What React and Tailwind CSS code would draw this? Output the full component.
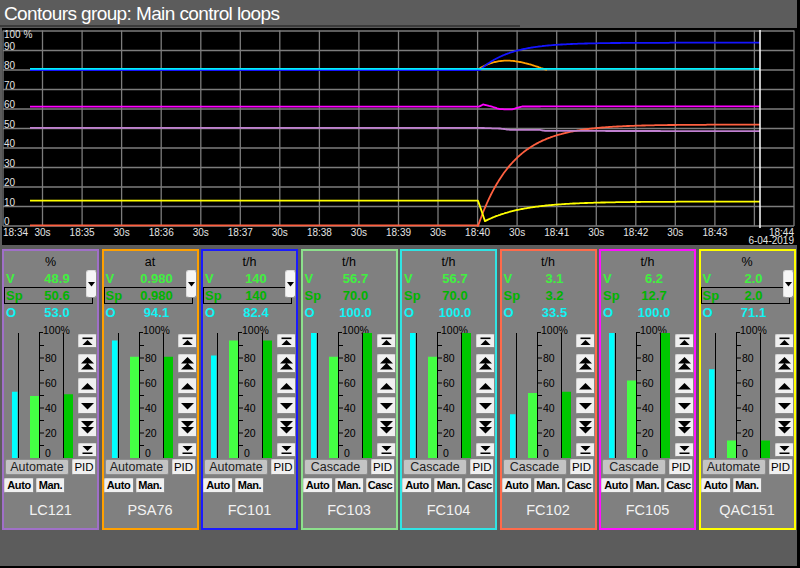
import React from 'react';

// trend chart helpers: page X -> svg x, value (0..100) -> svg y
const sx = (X) => X - 2;
const sy = (v) => 198 - 1.95 * v;

function piecewise(points) {
  return (X) => {
    for (let i = 1; i < points.length; i++) {
      const [x0, v0] = points[i - 1];
      const [x1, v1] = points[i];
      if (X <= x1) return v0 + ((v1 - v0) * (X - x0)) / (x1 - x0);
    }
    return points[points.length - 1][1];
  };
}

function series(fn, from = 30, to = 760) {
  const pts = [];
  for (let X = from; X <= to; X += 1) pts.push(`${sx(X)},${sy(fn(X)).toFixed(1)}`);
  return pts.join(' ');
}

const TRENDS = [
  { color: '#ff6040', pts: series((X) => (X < 478 ? 0.3 : 52 * (1 - Math.exp(-(X - 478) / 35)))) },
  {
    color: '#ffff00',
    pts: series((X) => {
      if (X < 478) return 13;
      if (X < 485) return 13 - (10.5 * (X - 478)) / 7;
      return 2.5 + 10 * (1 - Math.exp(-(X - 485) / 38));
    }),
  },
  { color: '#c080d0', pts: series(piecewise([[30, 50.3], [480, 50.3], [500, 50], [510, 49.3], [540, 49.3], [545, 48.8], [760, 48.6]])) },
  { color: '#ff00ff', pts: series(piecewise([[30, 61.2], [479, 61.2], [483, 62.3], [490, 61.5], [500, 59.9], [512, 59.8], [522, 61.3], [760, 61.4]])) },
  { color: '#ffa000', pts: series((X) => 80 + 4.8 * Math.sin(Math.PI * Math.pow((X - 478) / 69, 0.8)), 478, 547) },
  { color: '#1414ff', pts: series((X) => (X < 480 ? 80 : 80 + 14 * (1 - Math.exp(-(X - 480) / 30)))) },
  { color: '#00f0ff', pts: series(() => 80.6) },
];

// 18:34 ... 18:44, the half-minute under the cursor is not printed
const TIME_LABELS = Array.from({ length: 21 }, (_, k) => {
  if (k === 19) return '';
  if (k % 2 === 1) return '30s';
  return `18:${34 + k / 2}`;
});

function TrendChart() {
  const vLines = Array.from({ length: 21 }, (_, k) => 1 + 39.55 * k);
  const hVals = [0, 10, 20, 30, 40, 50, 60, 70, 80, 90, 100];
  return (
    <div className="ml-[2px] w-[795px] h-[217px] bg-black">
      <svg width="795" height="217" fontFamily="Liberation Sans, Arial, sans-serif">
        {vLines.map((x, i) => (
          <line key={'v' + i} x1={x.toFixed(1)} y1="2.5" x2={x.toFixed(1)} y2="198" stroke="#7c7c7c" strokeWidth="1.3" />
        ))}
        {hVals.map((v) => (
          <line key={'h' + v} x1="1" y1={sy(v)} x2="792" y2={sy(v)} stroke="#7c7c7c" strokeWidth="1.3" />
        ))}
        {hVals.map((v) => (
          <text key={'l' + v} x="2" y={v === 100 ? 10 : sy(v) - 0.8} fontSize="10" fill="#e4e4e4">
            {v === 100 ? '100 %' : v}
          </text>
        ))}
        {TRENDS.map((t, i) => (
          <polyline key={i} points={t.pts} fill="none" stroke={t.color} strokeWidth="1.8" strokeLinejoin="round" />
        ))}
        <line x1="758" y1="2" x2="758" y2="200" stroke="#ffffff" strokeWidth="1.5" />
        {TIME_LABELS.map((label, k) =>
          label ? (
            <text
              key={'t' + k}
              x={k === 0 ? 1 : k === 20 ? 792 : (1 + 39.55 * k).toFixed(1)}
              y="207.5"
              fontSize="10"
              fill="#e4e4e4"
              textAnchor={k === 0 ? 'start' : k === 20 ? 'end' : 'middle'}
            >
              {label}
            </text>
          ) : null
        )}
        <text x="792" y="215.5" fontSize="10" fill="#e4e4e4" textAnchor="end">
          6-04-2019
        </text>
      </svg>
    </div>
  );
}

const LOOPS = [
  { name: 'LC121', unit: '%', v: '48.9', sp: '50.6', o: '53.0', mode: 'Automate', border: 'border-[#a070c8]', boxed: true, bars: [53, 49.6, 51] },
  { name: 'PSA76', unit: 'at', v: '0.980', sp: '0.980', o: '94.1', mode: 'Automate', border: 'border-[#ffa000]', boxed: true, bars: [94, 81, 81] },
  { name: 'FC101', unit: 't/h', v: '140', sp: '140', o: '82.4', mode: 'Automate', border: 'border-[#1a1aff]', boxed: true, bars: [82, 94, 94] },
  { name: 'FC103', unit: 't/h', v: '56.7', sp: '70.0', o: '100.0', mode: 'Cascade', border: 'border-[#8ce08c]', boxed: false, bars: [100, 81, 100] },
  { name: 'FC104', unit: 't/h', v: '56.7', sp: '70.0', o: '100.0', mode: 'Cascade', border: 'border-[#30e4e4]', boxed: false, bars: [100, 81, 100] },
  { name: 'FC102', unit: 't/h', v: '3.1', sp: '3.2', o: '33.5', mode: 'Cascade', border: 'border-[#ff6a4a]', boxed: false, bars: [35, 52, 53] },
  { name: 'FC105', unit: 't/h', v: '6.2', sp: '12.7', o: '100.0', mode: 'Cascade', border: 'border-[#ff10ff]', boxed: false, bars: [100, 62, 100] },
  { name: 'QAC151', unit: '%', v: '2.0', sp: '2.0', o: '71.1', mode: 'Automate', border: 'border-[#ffff00]', boxed: true, bars: [71, 14, 14] },
];

function Gauge({ bars }) {
  const [o, pv, sp] = bars;
  const h = (p) => p * 1.25;
  const ticks = [10, 20, 30, 40, 50, 60, 70, 80, 90];
  return (
    <svg width="74" height="137" className="shrink-0" fontFamily="Liberation Sans, Arial, sans-serif">
      <rect x="8" y={137 - h(o)} width="5.5" height={h(o)} fill="#00ffff" />
      <line x1="14.5" y1="12" x2="14.5" y2="137" stroke="#000" />
      <rect x="26" y={137 - h(pv)} width="9" height={h(pv)} fill="#44ff44" />
      <line x1="35.5" y1="11" x2="35.5" y2="137" stroke="#000" />
      <line x1="35.5" y1="11.5" x2="39" y2="11.5" stroke="#000" />
      {ticks.map((t) => (
        <line key={t} x1="35.5" y1={137 - h(t)} x2="40" y2={137 - h(t)} stroke="#000" />
      ))}
      {[80, 60, 40, 20].map((t) => (
        <text key={t} x="41" y={137 - h(t) + 3.6} fontSize="10.5" fill="#000">
          {t}
        </text>
      ))}
      <text x="41" y="135.5" fontSize="10.5" fill="#000">
        0
      </text>
      <text x="39" y="12.5" fontSize="10.5" fill="#000">
        100%
      </text>
      <line x1="59.5" y1="12" x2="59.5" y2="137" stroke="#000" />
      <rect x="60" y={137 - h(sp)} width="9" height={h(sp)} fill="#00c800" />
    </svg>
  );
}

function Arrow({ kind }) {
  const up = (y, w) => `M${6.5 - w / 2} ${y + w / 2} L6.5 ${y} L${6.5 + w / 2} ${y + w / 2} Z`;
  const down = (y, w) => `M${6.5 - w / 2} ${y} L${6.5 + w / 2} ${y} L6.5 ${y + w / 2} Z`;
  let d = '';
  let bar = null;
  if (kind === 'top') {
    bar = <rect x="1.5" y="0.5" width="10" height="1.6" fill="#000" />;
    d = up(3, 10);
  } else if (kind === 'up2') d = up(0, 13) + ' ' + up(6, 13);
  else if (kind === 'up') d = up(1, 13);
  else if (kind === 'down') d = down(1, 13);
  else if (kind === 'down2') d = down(0, 13) + ' ' + down(6, 13);
  else if (kind === 'bottom') {
    d = down(0, 10);
    bar = <rect x="1.5" y="6.5" width="10" height="1.6" fill="#000" />;
  }
  const ht = kind === 'up2' || kind === 'down2' ? 13 : kind === 'top' || kind === 'bottom' ? 8.5 : 8;
  return (
    <svg width="13" height={ht} viewBox={`0 0 13 ${ht}`}>
      {bar}
      <path d={d} fill="#000" />
    </svg>
  );
}

const STEP_BUTTONS = [
  { kind: 'top', cls: 'mt-[13px] h-[14px]' },
  { kind: 'up2', cls: 'mt-[6px] h-[19px]' },
  { kind: 'up', cls: 'mt-[5px] h-[16px]' },
  { kind: 'down', cls: 'mt-[3px] h-[17px]' },
  { kind: 'down2', cls: 'mt-[4px] h-[19px]' },
  { kind: 'bottom', cls: 'mt-[6px] h-[14px]' },
];

const btn = 'bg-[#f0f0f0] border border-[#d4d4d4] border-r-[#8a8a8a] border-b-[#8a8a8a] rounded-[2px]';

function ValueRow({ label, value, color, boxed }) {
  return (
    <div className={`w-[89px] h-[17px] flex items-center border ${boxed ? 'border-black' : 'border-transparent'} text-[13px] font-bold leading-[15px] ${color}`}>
      <span className="w-[19px] pl-[1px]">{label}</span>
      <span className="w-[66px] text-center">{value}</span>
    </div>
  );
}

function LoopPanel({ loop }) {
  return (
    <div className={`relative w-[97px] h-[281px] border-2 ${loop.border} bg-[#808080] flex flex-col shrink-0`}>
      <div className="h-[19px] pt-[3px] text-center text-[12.5px] leading-[16px] text-black">{loop.unit}</div>
      <ValueRow label="V" value={loop.v} color="text-[#40f040]" />
      <ValueRow label="Sp" value={loop.sp} color="text-[#00b400]" boxed={loop.boxed} />
      <ValueRow label="O" value={loop.o} color="text-[#10f4f4]" />
      {loop.boxed && (
        <button className="absolute left-[82px] top-[19px] w-[11px] h-[28px] bg-[#f6f6f6] rounded-[3px] border border-[#dcdcdc] border-b-[#909090] border-r-[#909090] flex items-center justify-center">
          <svg width="7" height="5" viewBox="0 0 7 5">
            <path d="M0 0 L7 0 L3.5 4.5 Z" fill="#000" />
          </svg>
        </button>
      )}
      <div className="h-[137px] flex">
        <Gauge bars={loop.bars} />
        <div className="w-[19px] flex flex-col">
          {STEP_BUTTONS.map((b) => (
            <div key={b.kind} className={`${b.cls} ${btn} flex items-center justify-center`}>
              <Arrow kind={b.kind} />
            </div>
          ))}
        </div>
      </div>
      <div className="mt-[1px] h-[16px] flex">
        <div className="ml-[1px] w-[64px] h-[16px] bg-[#c4c4c4] border border-[#8c8c8c] rounded-[2px] text-[12.5px] leading-[14px] text-center text-[#222]">
          {loop.mode}
        </div>
        <div className={`ml-[3px] w-[24px] h-[16px] ${btn} text-[11.5px] leading-[14px] text-center text-black`}>PID</div>
      </div>
      <div className="mt-[3px] h-[15px] flex gap-[2px] text-[11px] font-bold leading-[13px] tracking-[-0.4px] text-black">
        <div className={`w-[30px] ${btn} text-center`}>Auto</div>
        <div className={`w-[29px] ${btn} text-center`}>Man.</div>
        {loop.mode === 'Cascade' && <div className={`w-[29px] ${btn} text-center`}>Casc</div>}
      </div>
      <div className="flex-1 flex items-center justify-center text-[14.5px] text-[#f2f2f2]">{loop.name}</div>
    </div>
  );
}

export default function App() {
  return (
    <div className="w-[800px] h-[568px] overflow-hidden bg-[#5c5c5c] border-r-[3px] border-b-2 border-black font-['Liberation_Sans',Arial,sans-serif]">
      <div className="h-[25px] pt-[2px] pl-[4px] text-[19px] leading-[24px] tracking-[-0.6px] text-white whitespace-nowrap">
        Contours group: Main control loops
      </div>
      <div className="w-[520px] h-[2px] bg-[#3a3a3a]" />
      <div className="h-[1px]" />
      <TrendChart />
      <div className="mt-[4px] ml-[2px] flex gap-[2.5px]">
        {LOOPS.map((loop) => (
          <LoopPanel key={loop.name} loop={loop} />
        ))}
      </div>
    </div>
  );
}
